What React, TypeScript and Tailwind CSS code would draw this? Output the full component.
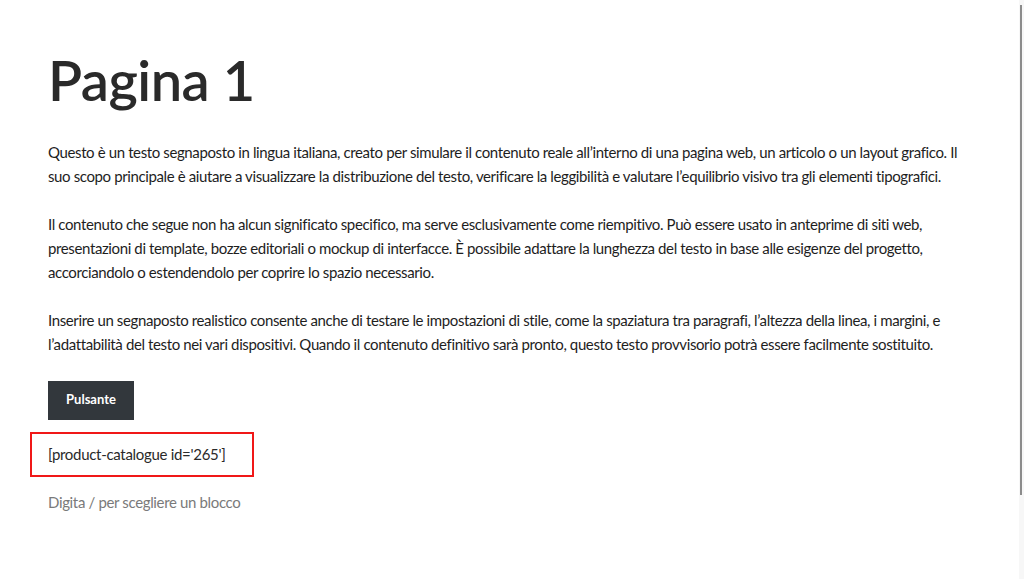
const paragraphs = [
  [
    "Questo è un testo segnaposto in lingua italiana, creato per simulare il contenuto reale all’interno di una pagina web, un articolo o un layout grafico. Il",
    "suo scopo principale è aiutare a visualizzare la distribuzione del testo, verificare la leggibilità e valutare l’equilibrio visivo tra gli elementi tipografici.",
  ],
  [
    "Il contenuto che segue non ha alcun significato specifico, ma serve esclusivamente come riempitivo. Può essere usato in anteprime di siti web,",
    "presentazioni di template, bozze editoriali o mockup di interfacce. È possibile adattare la lunghezza del testo in base alle esigenze del progetto,",
    "accorciandolo o estendendolo per coprire lo spazio necessario.",
  ],
  [
    "Inserire un segnaposto realistico consente anche di testare le impostazioni di stile, come la spaziatura tra paragrafi, l’altezza della linea, i margini, e",
    "l’adattabilità del testo nei vari dispositivi. Quando il contenuto definitivo sarà pronto, questo testo provvisorio potrà essere facilmente sostituito.",
  ],
];

export default function App() {
  return (
    <div className="relative min-h-[579px] overflow-hidden bg-white text-[#1e1e1e] font-['Lato',sans-serif]">
      {/* editor scrollbar */}
      <div className="absolute right-0 top-0 h-[579px] w-[5px] bg-[#f7f7f7]">
        <div className="ml-[1px] mt-[5px] h-[490px] w-[2px] bg-[#8c8c8c]" />
      </div>

      <div className="pl-[48px] pr-[54px] pt-[49px]">
        <h1 className="text-[56px] leading-[1.1] font-semibold text-[#2a2a2a] tracking-[-0.5px]">Pagina 1</h1>

        <div className="mt-[29px] flex flex-col gap-[24px] text-[15px] leading-[24px] tracking-[-0.38px]">
          {paragraphs.map((lines, i) => (
            <p key={i}>
              {lines.map((line, j) => (
                <span key={j} className="block whitespace-nowrap">
                  {line}
                </span>
              ))}
            </p>
          ))}
        </div>

        <div className="mt-[25px]">
          <button className="h-[39px] w-[86px] bg-[#32373c] text-white text-[13px] font-bold">Pulsante</button>
        </div>

        <div className="-ml-[18px] mt-[12px] flex h-[45px] w-[224px] items-center border-2 border-[#f01818] pl-[16px] text-[15px] tracking-[-0.3px] text-[#2a2a2a]">
          [product-catalogue id='265']
        </div>

        <p className="mt-[14px] text-[15px] tracking-[-0.35px] text-[#7a7a7a]">Digita / per scegliere un blocco</p>
      </div>
    </div>
  );
}
